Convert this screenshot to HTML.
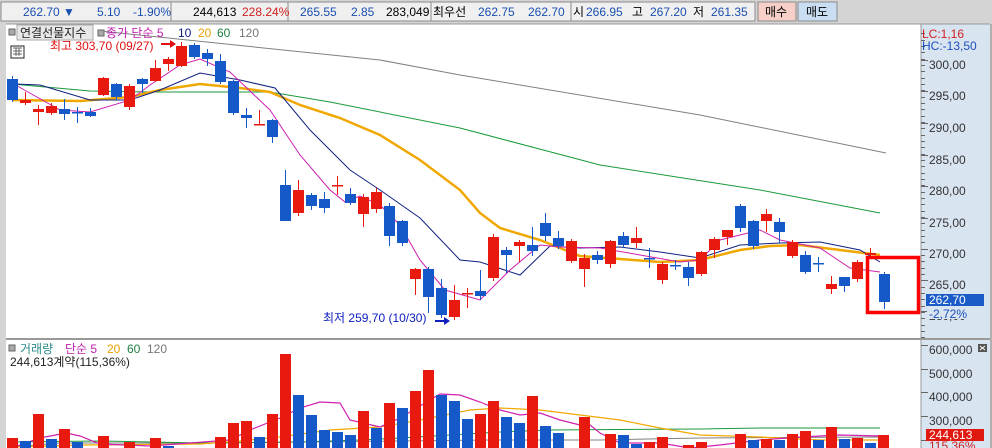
<!DOCTYPE html>
<html><head><meta charset="utf-8"><style>
body{margin:0;width:992px;height:448px;overflow:hidden;background:#d4d4d4;font-family:"Liberation Sans","Noto Sans CJK KR",sans-serif}
svg{display:block}
text{font-family:"Liberation Sans","Noto Sans CJK KR",sans-serif;font-size:12px}
</style></head><body>
<svg id="s" width="992" height="448" viewBox="0 0 992 448" xmlns="http://www.w3.org/2000/svg">
<rect x="0" y="0" width="992" height="448" fill="#d4d4d4"/>
<rect x="1" y="2" width="170" height="19" fill="#f0f0f0" stroke="#8a8a8a"/>
<rect x="171" y="2" width="117" height="19" fill="#f0f0f0" stroke="#8a8a8a"/>
<rect x="288" y="2" width="143" height="19" fill="#f0f0f0" stroke="#8a8a8a"/>
<rect x="431" y="2" width="140" height="19" fill="#f0f0f0" stroke="#8a8a8a"/>
<rect x="571" y="2" width="184" height="19" fill="#f0f0f0" stroke="#8a8a8a"/>
<rect x="758" y="2" width="38" height="19" fill="#f5cfc8" stroke="#8a8a8a"/>
<rect x="798" y="2" width="39" height="19" fill="#c9def2" stroke="#8a8a8a"/>
<g font-size="13">
<text x="23" y="16" fill="#1a4fb0" font-size="13">262.70 ▼</text>
<text x="97" y="16" fill="#1a4fb0" font-size="13">5.10</text>
<text x="133" y="16" fill="#1a4fb0" font-size="13">-1.90%</text>
<text x="193" y="16" fill="#000" font-size="13">244,613</text>
<text x="242" y="16" fill="#d02020" font-size="13">228.24%</text>
<text x="300" y="16" fill="#1a4fb0" font-size="13">265.55</text>
<text x="351" y="16" fill="#1a4fb0" font-size="13">2.85</text>
<text x="386" y="16" fill="#000" font-size="13">283,049</text>
<text x="433" y="16" fill="#000" font-size="13">최우선</text>
<text x="478" y="16" fill="#1a4fb0" font-size="13">262.75</text>
<text x="528" y="16" fill="#1a4fb0" font-size="13">262.70</text>
<text x="573" y="16" fill="#000" font-size="13">시</text>
<text x="586" y="16" fill="#1a4fb0" font-size="13">266.95</text>
<text x="632" y="16" fill="#000" font-size="13">고</text>
<text x="650" y="16" fill="#1a4fb0" font-size="13">267.20</text>
<text x="693" y="16" fill="#000" font-size="13">저</text>
<text x="711" y="16" fill="#1a4fb0" font-size="13">261.35</text>
<text x="765" y="16" fill="#000" font-size="13">매수</text>
<text x="806" y="16" fill="#000" font-size="13">매도</text>
</g>
<rect x="6" y="24" width="915" height="424" fill="#fff"/>
<rect x="921" y="24" width="69" height="424" fill="#d9e4f1"/>
<line x1="921" y1="24" x2="921" y2="448" stroke="#999"/>
<line x1="6" y1="24" x2="990" y2="24" stroke="#999"/>
<line x1="6" y1="339" x2="990" y2="339" stroke="#999" stroke-width="2"/>
<rect x="990" y="24" width="2" height="424" fill="#b0b0b0"/>
<g id="ticks" stroke="#666"></g>
<g id="lines" fill="none"></g>
<g id="cand"></g>
<rect x="9" y="29" width="6" height="6" fill="#aaa" stroke="#666"/>
<rect x="17" y="25" width="76" height="15" fill="#e8e8e8" stroke="#aaa"/>
<text x="20" y="37" fill="#222">연결선물지수</text>
<rect x="98" y="30" width="6" height="6" fill="#aaa" stroke="#666"/>
<text x="106" y="37" fill="#c020b0">종가 단순 5</text>
<text x="178" y="37" fill="#102080">10</text>
<text x="198" y="37" fill="#e8a000">20</text>
<text x="217" y="37" fill="#208040">60</text>
<text x="239" y="37" fill="#777">120</text>
<rect x="11" y="46" width="13" height="12" fill="#fff" stroke="#222"/>
<path d="M13 48h9M13 51h9M13 54h9M16 48v8M19 48v8" stroke="#666"/>
<text x="50" y="50" fill="#e01010">최고 303,70 (09/27)</text>
<path d="M161 44h10" stroke="#e01010" stroke-width="2"/><path d="M170 40l6 4-6 4z" fill="#e01010"/>
<text x="323" y="322" fill="#1020c0">최저 259,70 (10/30)</text>
<path d="M435 321h10" stroke="#1020c0" stroke-width="2"/><path d="M444 317l6 4-6 4z" fill="#1020c0"/>
<rect x="867.5" y="257.5" width="51" height="55" fill="none" stroke="#f00" stroke-width="3.5"/>
<text x="922" y="38" fill="#d02020">LC:1,16</text>
<text x="922" y="50" fill="#1a50c0">HC:-13,50</text>
<g fill="#333">
<text x="929" y="69">300,00</text><text x="929" y="100">295,00</text><text x="929" y="132">290,00</text>
<text x="929" y="164">285,00</text><text x="929" y="195">280,00</text><text x="929" y="227">275,00</text>
<text x="929" y="258">270,00</text><text x="929" y="289">265,00</text><text x="929" y="320">260,00</text>
</g>
<rect x="926" y="294" width="58" height="12" fill="#1a5bc8"/>
<text x="929" y="304" fill="#fff">262,70</text>
<rect x="927" y="308" width="50" height="11" fill="#d9e4f1"/>
<text x="929" y="318" fill="#1a50c0">-2,72%</text>
<g fill="#333">
<text x="929" y="354">600,000</text><text x="929" y="378">500,000</text>
<text x="929" y="401">400,000</text><text x="929" y="425">300,000</text>
</g>
<rect x="978" y="344" width="9" height="8" fill="#555"/>
<path d="M980 346l5 4M985 346l-5 4" stroke="#fff"/>
<rect x="926" y="429" width="58" height="12" fill="#e01810"/>
<text x="929" y="439" fill="#fff">244,613</text>
<text x="929" y="450" fill="#d02020">115,36%</text>
<rect x="9" y="345" width="6" height="6" fill="#aaa" stroke="#666"/>
<text x="20" y="353" fill="#2a8a8a">거래량</text>
<text x="65" y="353" fill="#c020b0">단순 5</text>
<text x="107" y="353" fill="#e8a000">20</text>
<text x="127" y="353" fill="#208040">60</text>
<text x="147" y="353" fill="#777">120</text>
<text x="10" y="366" fill="#222">244,613계약(115,36%)</text>
</svg>
<script>
var NS="http://www.w3.org/2000/svg";
function el(p,t,a){var e=document.createElementNS(NS,t);for(var k in a)e.setAttribute(k,a[k]);document.getElementById(p).appendChild(e);return e;}
var R="#e8190f",B="#1558c8";
var C=[[12,79,100,76,102,B],[25,100,103,92,105,R],[38,109,112,105,125,R],[51,106,113,103,115,R],[64,109,114,99,120,B],[77,112,112,107,123,B],[90,112,116,108,117,B],[103,78,95,77,96,R],[116,84,97,83,100,B],[129,86,107,84,110,R],[142,79,84,78,93,B],[155,68,81,60,82,R],[168,59,64,57,71,R],[181,46,66,42,67,R],[194,45,57,43,59,B],[207,53,59,49,66,B],[220,61,82,54,84,B],[233,81,113,80,115,B],[246,115,118,108,128,B],[259,124,124,110,125,R],[272,120,137,119,143,B],[285,185,221,170,221,B],[298,190,213,180,216,R],[311,195,206,193,210,B],[324,199,208,192,213,B],[337,185,185,176,195,R],[350,194,203,188,205,B],[363,197,214,194,227,R],[376,192,209,188,213,R],[389,206,236,203,246,B],[402,221,243,220,246,B],[415,269,279,268,295,R],[428,269,297,267,313,B],[441,288,315,279,318,B],[454,300,317,285,320,R],[467,293,293,288,308,R],[480,291,296,270,300,B],[493,237,278,234,281,R],[506,250,255,247,273,B],[519,242,246,240,262,R],[532,245,251,227,256,B],[545,223,236,213,241,B],[558,238,246,231,249,B],[571,241,261,239,263,R],[584,258,269,254,287,R],[597,255,260,251,264,B],[610,241,264,240,268,R],[623,236,245,232,248,B],[636,238,243,227,248,R],[649,258,258,248,268,B],[662,264,280,262,284,R],[675,265,265,260,270,B],[688,267,278,262,286,B],[701,252,274,251,276,R],[714,239,250,237,258,R],[727,230,237,230,245,R],[740,206,228,204,232,B],[753,221,246,220,249,B],[766,214,221,209,232,R],[779,222,232,218,243,B],[792,242,256,240,258,R],[805,255,272,251,274,B],[818,263,263,257,272,B],[831,284,289,276,294,R],[844,277,286,277,292,B],[857,262,279,260,282,R],[870,253,255,248,258,R],[884,274,302,272,309,B]];
C.forEach(function(c){
 el("cand","line",{x1:c[0]+.5,x2:c[0]+.5,y1:c[3],y2:c[4],stroke:c[5],"stroke-width":1});
 var h=c[2]-c[1];
 if(h<2) el("cand","rect",{x:c[0]-5,y:c[1],width:11,height:1.5,fill:c[5]});
 else el("cand","rect",{x:c[0]-5,y:c[1],width:11,height:h,fill:c[5]});
});
function pl(pts,col,w){el("lines","polyline",{points:pts,stroke:col,"stroke-width":w,fill:"none"});}
pl("100,31 380,60 460,75 700,115 886,153","#808080",1);
pl("12,84 90,91 150,92 270,92 330,102 460,128 600,165 760,190 880,213","#1a9a3a",1);
pl("12,100 80,101 130,97 160,90 200,84 240,88 270,92 300,105 340,118 380,135 420,160 460,190 480,213 500,228 540,240 580,256 620,259 660,262 700,260 740,250 770,246 800,245 840,250 880,255","#f0a800",2.5);
pl("15,84 40,85 90,100 130,100 160,90 200,73 240,80 275,88 310,130 350,170 380,190 420,218 460,260 480,262 520,275 550,246 580,248 620,247 660,252 700,258 740,245 780,243 820,242 860,250 880,262","#102080",1);
pl("12,83 60,110 90,112 130,100 150,85 180,65 200,59 230,72 270,110 300,155 330,190 345,202 360,196 380,205 400,225 420,260 445,290 480,300 510,270 540,245 560,247 600,248 640,255 680,262 700,260 720,240 760,230 780,240 820,248 850,268 880,272","#d020b0",1);
for(var y=65-31.65*1;y<340;y+=6.33){el("ticks","line",{x1:921,x2:925,y1:Math.round(y)+.5,y2:Math.round(y)+.5});}
[65,96,128,160,191,223,254,285,316,350,374,397,421,445].forEach(function(y){el("ticks","line",{x1:921,x2:928,y1:y-4.5,y2:y-4.5});});
var V=[[12,438,R],[25,441,B],[38,414,R],[51,439,B],[64,429,R],[77,442,B],[103,436,R],[129,442,R],[155,438,R],[168,446,B],[220,437,R],[233,423,R],[246,421,R],[259,437,B],[272,414,R],[285,354,R],[298,395,B],[311,415,B],[324,430,B],[337,432,B],[350,435,B],[363,411,R],[376,428,B],[389,403,R],[402,408,B],[415,391,R],[428,370,R],[441,395,B],[454,401,B],[467,419,B],[480,414,R],[493,401,R],[506,417,B],[519,423,B],[532,396,R],[545,426,B],[558,433,B],[584,417,R],[610,434,R],[623,435,B],[636,444,B],[649,442,R],[662,437,R],[688,445,R],[701,442,R],[740,434,R],[753,440,B],[766,439,R],[779,440,B],[792,434,R],[805,431,R],[818,440,B],[831,427,R],[844,439,B],[857,438,R],[870,443,B],[883,435,R]];
V.forEach(function(v){el("cand","rect",{x:v[0]-5,y:v[1],width:11,height:448-v[1],fill:v[2]});});
el("lines","polyline",{points:"12,447 60,443 100,443 200,443 300,442 400,441 490,440 600,440 700,438 880,437",stroke:"#808080","stroke-width":1,fill:"none"});
el("lines","polyline",{points:"12,442 100,441 200,443 300,442 360,440 400,438 500,432 550,430 700,429 760,428 880,428",stroke:"#1a9a3a","stroke-width":1,fill:"none"});
el("lines","polyline",{points:"12,447 80,445 200,444 240,441 280,437 330,430 380,427 420,420 470,410 500,408 540,410 580,415 620,420 660,428 700,435 760,437 820,440 880,440",stroke:"#f0a800","stroke-width":1.2,fill:"none"});
el("lines","polyline",{points:"12,448 40,438 66,433 80,436 100,444 150,446 230,440 250,430 280,418 300,408 320,402 340,403 350,420 380,427 400,418 440,394 460,395 480,402 500,410 520,415 540,413 560,420 580,425 590,425 600,433 620,443 660,443 690,448 720,445 760,440 800,437 840,435 880,436",stroke:"#d020b0","stroke-width":1.2,fill:"none"});
</script>
</body></html>
